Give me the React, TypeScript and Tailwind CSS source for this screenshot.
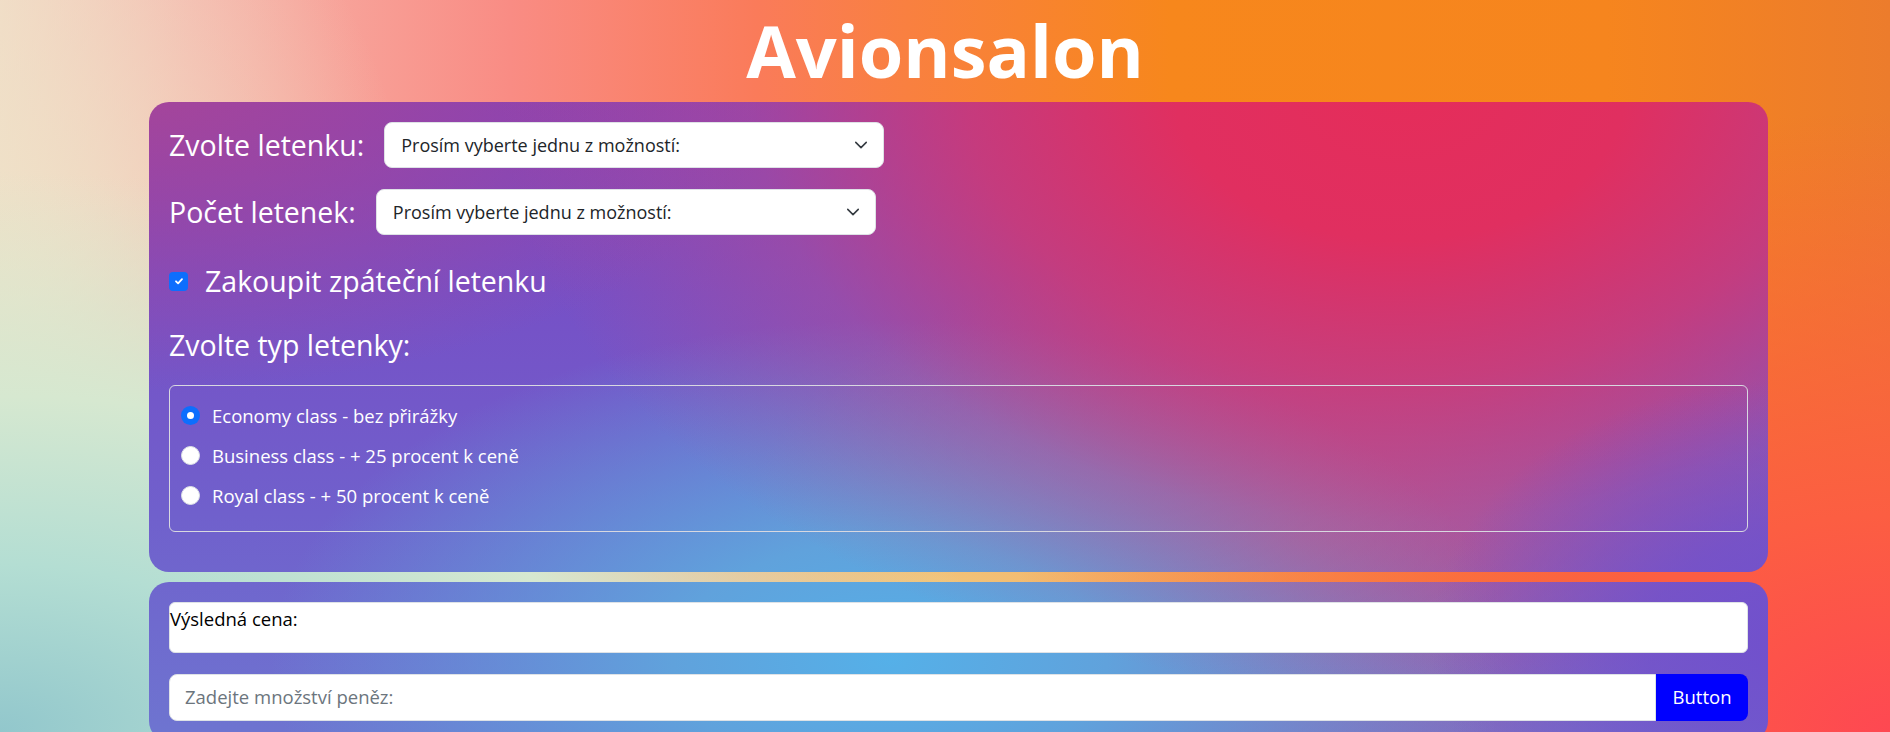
import React from 'react'

const font = "font-['Segoe_UI','Open_Sans','Noto_Sans',sans-serif]"

const pageBg =
  "bg-[image:radial-gradient(ellipse_1000px_560px_at_0%_100%,#92c7cc_0%,#b4ded3_30%,#d6e8d0_60%,rgba(230,228,204,0)_100%),radial-gradient(ellipse_420px_520px_at_0%_40%,#eee2c8_0%,rgba(238,226,200,0)_100%),radial-gradient(ellipse_900px_620px_at_100%_100%,#fe4852_0%,#fc5e42_35%,rgba(250,110,50,0)_100%),radial-gradient(ellipse_700px_260px_at_50%_80%,#f2c47a_0%,rgba(242,196,122,0)_100%),linear-gradient(90deg,#f2dac6_0%,#f6b6ac_10%,#f98c84_27%,#fa7b5a_40%,#f98040_48%,#f7871c_62%,#f6851e_85%,#ec7c2c_100%)]"

const panelBg =
  "bg-fixed bg-[image:radial-gradient(ellipse_360px_260px_at_1790px_640px,#7150cc_0%,rgba(113,80,204,0.8)_40%,rgba(113,80,204,0)_100%),radial-gradient(ellipse_900px_600px_at_1400px_90px,#e52d5a_0%,#e02f60_25%,rgba(214,56,110,0.8)_48%,rgba(196,72,134,0.4)_72%,rgba(190,76,140,0)_100%),radial-gradient(ellipse_620px_340px_at_890px_660px,#55b0e8_0%,#60a2dc_35%,rgba(96,162,220,0)_100%),radial-gradient(ellipse_560px_300px_at_1300px_540px,rgba(190,90,140,0.8)_0%,rgba(184,88,142,0)_100%),radial-gradient(ellipse_640px_300px_at_140px_90px,#a5459a_0%,rgba(165,69,154,0)_100%),linear-gradient(180deg,#8a3cb2_0%,#7650c6_40%,#7060cc_70%,#6e74d0_100%)]"

function Chevron() {
  return (
    <svg
      className="pointer-events-none absolute right-[16px] top-1/2 -translate-y-1/2"
      width="14"
      height="14"
      viewBox="0 0 16 16"
      fill="none"
    >
      <path
        d="M2 5l6 6 6-6"
        stroke="#343a40"
        strokeWidth="1.8"
        strokeLinecap="round"
        strokeLinejoin="round"
      />
    </svg>
  )
}

function SelectBox() {
  return (
    <div className="relative w-[500px]">
      <select className="h-[46px] w-full appearance-none rounded-lg border border-[#dee2e6] bg-white pl-[16px] pr-[40px] text-[18px] text-[#212529] outline-none">
        <option>Prosím vyberte jednu z možností:</option>
      </select>
      <Chevron />
    </div>
  )
}

function Radio({ label, checked }: { label: string; checked?: boolean }) {
  return (
    <label className="flex h-[40px] items-center gap-[12px]">
      {checked ? (
        <span className="flex h-[19px] w-[19px] items-center justify-center rounded-full bg-[#0d6efd]">
          <span className="h-[7px] w-[7px] rounded-full bg-white" />
        </span>
      ) : (
        <span className="h-[19px] w-[19px] rounded-full border border-[#dee2e6] bg-white" />
      )}
      <span className="text-[18.5px] text-white">{label}</span>
    </label>
  )
}

export default function App() {
  return (
    <div className={`h-[732px] overflow-hidden ${pageBg} ${font}`}>
      <h1 className="h-[102px] text-center text-[72px] font-bold leading-[100px] text-white">
        Avionsalon
      </h1>

      <div className={`ml-[149px] w-[1619px] rounded-[20px] ${panelBg} px-[20px] pt-[20px] pb-[40px]`}>
        <div className="flex items-center gap-[20px]">
          <span className="text-[28.5px] text-white">Zvolte letenku:</span>
          <SelectBox />
        </div>
        <div className="mt-[21px] flex items-center gap-[20px]">
          <span className="text-[28.5px] text-white">Počet letenek:</span>
          <SelectBox />
        </div>

        <label className="mt-[28px] flex h-[36px] items-center gap-[17px]">
          <span className="flex h-[19px] w-[19px] items-center justify-center rounded-[4px] bg-[#0d6efd]">
            <svg width="12" height="12" viewBox="0 0 20 20" fill="none">
              <path
                d="M5 10.5l3.5 3.5L15 7"
                stroke="white"
                strokeWidth="3"
                strokeLinecap="round"
                strokeLinejoin="round"
              />
            </svg>
          </span>
          <span className="text-[28.5px] text-white">Zakoupit zpáteční letenku</span>
        </label>

        <p className="mt-[25px] text-[28.5px] text-white">Zvolte typ letenky:</p>

        <fieldset className="mt-[18px] rounded-md border border-[#d8d8e0] pt-[10px] pb-[15px] pl-[11px]">
          <Radio label="Economy class - bez přirážky" checked />
          <Radio label="Business class - + 25 procent k ceně" />
          <Radio label="Royal class - + 50 procent k ceně" />
        </fieldset>
      </div>

      <div className={`mt-[10px] ml-[149px] w-[1619px] rounded-[20px] ${panelBg} px-[20px] pt-[20px] pb-[20px]`}>
        <div className="h-[51px] rounded-md border border-[#dee2e6] bg-white text-[18.5px] leading-[32px] text-black">
          Výsledná cena:
        </div>
        <div className="mt-[21px] flex h-[47px]">
          <input
            className="min-w-0 flex-1 rounded-l-lg border border-[#dee2e6] bg-white px-[15px] text-[18.5px] text-[#212529] outline-none placeholder:text-[#6c757d]"
            placeholder="Zadejte množství peněz:"
          />
          <button className="w-[92px] rounded-r-lg bg-[#0000ff] text-[18.5px] text-white">
            Button
          </button>
        </div>
      </div>
    </div>
  )
}
